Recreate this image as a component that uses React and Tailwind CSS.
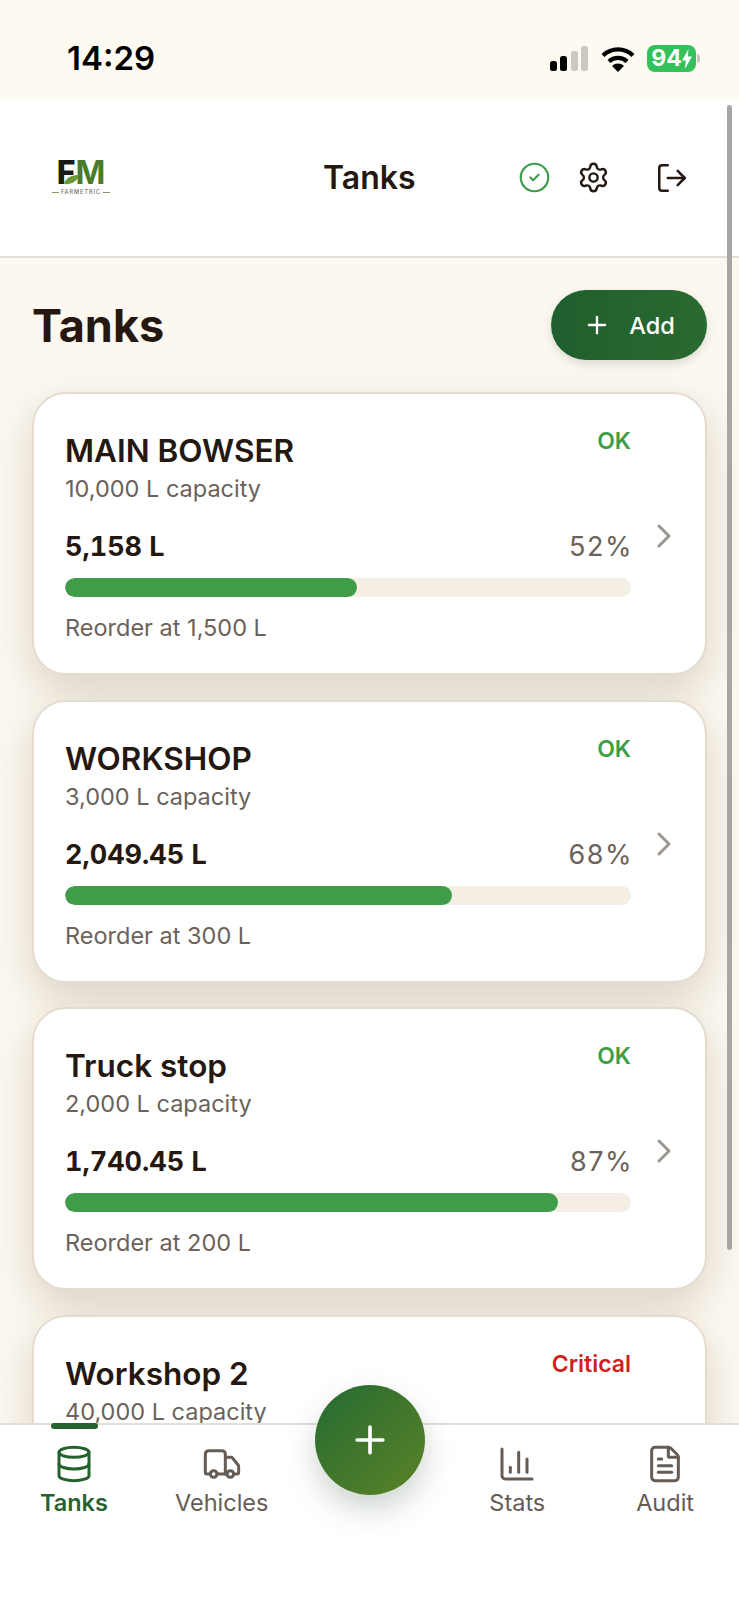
import React from "react";
import { CircleCheck, Settings, LogOut, Plus, ChevronRight, Database, Truck, ChartColumn, FileText } from "lucide-react";

const tanks = [
  { name: "MAIN BOWSER", capacity: "10,000 L capacity", level: "5,158 L", pct: 52, fill: 51.58, reorder: "Reorder at 1,500 L" },
  { name: "WORKSHOP", capacity: "3,000 L capacity", level: "2,049.45 L", pct: 68, fill: 68.3, reorder: "Reorder at 300 L" },
  { name: "Truck stop", capacity: "2,000 L capacity", level: "1,740.45 L", pct: 87, fill: 87.02, reorder: "Reorder at 200 L" },
];

function StatusBar() {
  return (
    <div className="flex h-[99px] shrink-0 items-center justify-between bg-[#fdfaf2] pl-[67px] pr-[39px] pt-[18px]">
      <span className="text-[33px] font-semibold leading-none text-black">14:29</span>
      <div className="flex items-center gap-[12px]">
        <svg width="40" height="26" viewBox="0 0 40 26">
          <rect x="1" y="15" width="7" height="10" rx="2.5" fill="#000" />
          <rect x="11" y="10" width="7" height="15" rx="2.5" fill="#000" />
          <rect x="22" y="5" width="7" height="20" rx="2.5" fill="#c9c8c3" />
          <rect x="32" y="0" width="7" height="25" rx="2.5" fill="#c9c8c3" />
        </svg>
        <svg width="34" height="26" viewBox="0 0 34 26" fill="none" stroke="#000" strokeWidth="4.2">
          <path d="M2 9.5a21.5 21.5 0 0 1 30 0" />
          <path d="M8 15.5a13 13 0 0 1 18 0" />
          <path d="M17 26l-6-6a8.5 8.5 0 0 1 12 0z" fill="#000" stroke="none" />
        </svg>
        <div className="flex items-center">
          <div className="flex h-[27px] w-[49px] items-center justify-center rounded-[8px] bg-[#34c05a] text-[23px] font-bold leading-none text-white">
            94
            <svg width="10" height="20" viewBox="0 0 10 20" fill="#fff">
              <path d="M6.5 0L0 11.5h3.8L2.8 20 10 7.5H5.8z" />
            </svg>
          </div>
          <div className="ml-[1px] h-[9px] w-[3px] rounded-r-full bg-[#c9c8c3]" />
        </div>
      </div>
    </div>
  );
}

function Logo() {
  return (
    <div className="flex w-[62px] flex-col items-center">
      <div className="relative flex h-[28px] items-center text-[32px] leading-[28px]">
        <span className="font-extrabold text-[#1a1a18]">F</span>
        <span className="font-bold text-[#4b7a2a]">M</span>
        {/* leaf in the gap under the arm of the F */}
        <svg width="17" height="11" viewBox="0 0 17 11" className="absolute bottom-[2px] left-[6px]">
          <path d="M1 10C3 3 9 1 16 1C15 7 8 11 1 10Z" fill="#6c9a3a" />
        </svg>
      </div>
      <div className="mt-[2px] flex items-center gap-[2px]">
        <span className="h-px w-[7px] bg-[#7f9a68]" />
        <span className="text-[5.5px] font-medium leading-[7px] tracking-[1px] text-[#6d6d60]">FARMETRIC</span>
        <span className="h-px w-[7px] bg-[#7f9a68]" />
      </div>
    </div>
  );
}

function Header() {
  return (
    <div className="flex h-[159px] shrink-0 items-center border-b-2 border-[#e4dfd4] bg-white pl-[50px] pr-[50px]">
      <Logo />
      <span className="ml-[211px] text-[32px] font-semibold leading-none text-[#241810]">Tanks</span>
      <div className="ml-auto flex items-center">
        <CircleCheck size={33} strokeWidth={1.6} className="text-[#3f9d4a]" />
        <Settings size={33} strokeWidth={1.75} className="ml-[26px] text-[#241810]" />
        <LogOut size={34} strokeWidth={1.75} className="ml-[45px] text-[#241810]" />
      </div>
    </div>
  );
}

function TankCard({ tank }) {
  return (
    <div className="flex h-[283px] shrink-0 rounded-[34px] border-2 border-[#e3dccf] bg-white pl-[31px] pr-[21px] pt-[34px] shadow-[0_16px_40px_rgba(90,65,30,0.2)]">
      <div className="flex-1">
        <div className="flex items-start justify-between">
          <span className="text-[31.5px] font-semibold leading-[45px] text-[#241810]">{tank.name}</span>
          <span className="text-[23px] font-semibold leading-[26px] text-[#3f9d4a]">OK</span>
        </div>
        <div className="text-[23.5px] leading-[32px] text-[#6b625a]">{tank.capacity}</div>
        <div className="mt-[22px] flex items-center justify-between">
          <span className="text-[27px] font-bold tabular-nums leading-[40px] text-[#241810]">{tank.level}</span>
          <span className="mr-[-2px] text-[27px] leading-[40px] tracking-[1.5px] text-[#6b625a]">{tank.pct}%</span>
        </div>
        <div className="mt-[11px] h-[19px] overflow-hidden rounded-full bg-[#f4eee5]">
          <div className="h-full rounded-full bg-[#3f9d4a]" style={{ width: `${tank.fill}%` }} />
        </div>
        <div className="mt-[15px] text-[23.5px] leading-[32px] text-[#6b625a]">{tank.reorder}</div>
      </div>
      <ChevronRight size={40} strokeWidth={1.75} className="ml-[13px] mt-[88px] text-[#9a958e]" />
    </div>
  );
}

function CriticalCard() {
  return (
    <div className="flex h-[283px] shrink-0 rounded-[34px] border-2 border-[#e3dccf] bg-white pl-[31px] pr-[74px] pt-[34px] shadow-[0_16px_40px_rgba(90,65,30,0.2)]">
      <div className="flex-1">
        <div className="flex items-start justify-between">
          <span className="text-[31.5px] font-semibold leading-[45px] text-[#241810]">Workshop 2</span>
          <span className="text-[23px] font-semibold leading-[26px] text-[#cf1f1f]">Critical</span>
        </div>
        <div className="text-[23.5px] leading-[32px] text-[#6b625a]">40,000 L capacity</div>
      </div>
    </div>
  );
}

function NavItem({ icon: Icon, label, active }) {
  return (
    <div className={`relative flex flex-col items-center pt-[19px] ${active ? "text-[#25622f]" : "text-[#655c55]"}`}>
      {active && <div className="absolute left-[51px] top-[-2px] h-[6px] w-[47px] rounded-full bg-[#25622f]" />}
      <Icon size={40} strokeWidth={1.8} />
      <span className={`mt-[3px] text-[23.5px] leading-[32px] ${active ? "font-semibold" : ""}`}>{label}</span>
    </div>
  );
}

export default function App() {
  return (
    <div className="relative flex h-[1600px] w-[739px] flex-col overflow-hidden bg-[#fcf8f0] font-['Inter',sans-serif]">
      <StatusBar />
      <Header />
      <div className="flex min-h-0 flex-1 flex-col overflow-hidden px-[32px]">
        <div className="mt-[32px] flex h-[70px] shrink-0 items-center justify-between">
          <h1 className="pt-[2px] text-[45px] font-bold leading-[68px] text-[#241810]">Tanks</h1>
          <div className="flex h-[70px] w-[156px] items-center justify-center gap-[18px] rounded-full bg-gradient-to-r from-[#1f5f2e] to-[#2a6a30] text-white shadow-[0_4px_10px_rgba(30,60,30,0.15)]">
            <Plus size={28} strokeWidth={2} />
            <span className="pt-[2px] text-[23.5px] font-medium">Add</span>
          </div>
        </div>
        <div className="mt-[32px] flex flex-col gap-[24.5px]">
          {tanks.map((t) => (
            <TankCard key={t.name} tank={t} />
          ))}
          <CriticalCard />
        </div>
      </div>
      <div className="relative grid h-[177px] shrink-0 grid-cols-5 border-t-2 border-[#e4dfd4] bg-white">
        <NavItem icon={Database} label="Tanks" active />
        <NavItem icon={Truck} label="Vehicles" />
        <div />
        <NavItem icon={ChartColumn} label="Stats" />
        <NavItem icon={FileText} label="Audit" />
        <div className="absolute left-[315px] top-[-40px] flex h-[110px] w-[110px] items-center justify-center rounded-full bg-gradient-to-br from-[#226a30] to-[#5a8326] text-white shadow-[0_14px_30px_rgba(30,60,30,0.22)]">
          <Plus size={44} strokeWidth={2} />
        </div>
      </div>
      <div className="absolute left-[727px] top-[105px] h-[1145px] w-[5px] rounded-full bg-[#a8a6a2]" />
    </div>
  );
}
